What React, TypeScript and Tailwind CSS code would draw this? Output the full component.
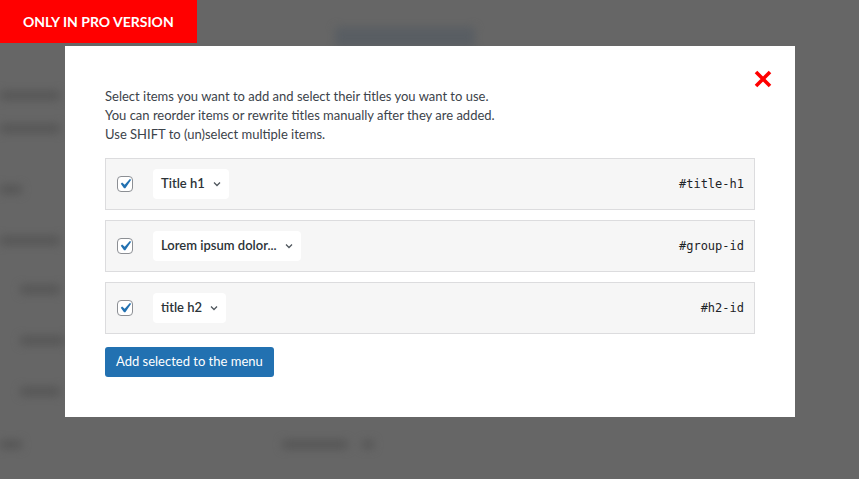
import React from "react";

const rows = [
  { title: "Title h1", id: "#title-h1" },
  { title: "Lorem ipsum dolor...", id: "#group-id" },
  { title: "title h2", id: "#h2-id" },
];

function Check() {
  return (
    <div className="w-4 h-4 rounded-[4px] border border-[#8c8f94] bg-white flex items-center justify-center shrink-0 overflow-visible">
      <svg width="20" height="20" viewBox="0 0 20 20" className="shrink-0 -m-1">
        <path d="M14.83 4.89l1.34.94-5.81 8.38H9.02L5.78 9.67l1.34-1.25 2.57 2.4z" fill="#2271b1" />
      </svg>
    </div>
  );
}

function Chevron() {
  return (
    <svg width="10" height="10" viewBox="0 0 10 10" className="ml-[7px]">
      <path d="M2 3.5 L5 6.5 L8 3.5" stroke="#50575e" strokeWidth="1.3" fill="none" />
    </svg>
  );
}

function Blob({ w, className = "" }: { w: string; className?: string }) {
  return <div className={`h-[9px] bg-[#565656] rounded ${w} ${className}`} />;
}

export default function App() {
  return (
    <div
      className="relative w-[859px] h-[479px] overflow-hidden bg-[#666666]"
      style={{ fontFamily: 'Lato, "Noto Sans", sans-serif' }}
    >
      {/* blurred background page */}
      <div className="absolute inset-0 blur-[4px] flex flex-col">
        <div className="h-[27px]" />
        <div className="pl-[335px]">
          <div className="w-[140px] h-[20px] rounded bg-[#595e63]" />
        </div>
        <div className="flex flex-col gap-[24px] pt-[44px]">
          <Blob w="w-[60px]" />
          <Blob w="w-[60px]" />
        </div>
        <div className="flex flex-col pt-[52px] gap-[42px]">
          <Blob w="w-[22px]" />
          <Blob w="w-[60px]" />
        </div>
        <div className="flex flex-col pl-[20px] pt-[40px] gap-[42px]">
          <Blob w="w-[40px]" />
          <Blob w="w-[45px]" />
          <Blob w="w-[40px]" />
        </div>
        <div className="flex items-center pt-[44px]">
          <Blob w="w-[22px]" />
          <Blob w="w-[66px]" className="ml-[260px]" />
          <Blob w="w-[12px]" className="ml-[14px]" />
        </div>
      </div>

      {/* pro banner */}
      <div className="absolute left-0 top-0 w-[197px] h-[43px] bg-[#ff0000] flex items-center pl-[23px] text-white font-bold text-[14px]">
        ONLY IN PRO VERSION
      </div>

      {/* modal */}
      <div className="absolute left-[65px] top-[46px] w-[730px] h-[371px] bg-white px-10 pt-[41px]">
        <svg
          className="absolute right-[23px] top-[24px]"
          width="18"
          height="18"
          viewBox="0 0 18 18"
        >
          <path d="M2 2 L16 16 M16 2 L2 16" stroke="#ff0000" strokeWidth="3.6" />
        </svg>

        <div className="text-[13px] leading-[19px] text-[#3c434a]">
          <p>Select items you want to add and select their titles you want to use.</p>
          <p>You can reorder items or rewrite titles manually after they are added.</p>
          <p>Use SHIFT to (un)select multiple items.</p>
        </div>

        <div className="mt-[14px] flex flex-col gap-[10px]">
          {rows.map((r) => (
            <div
              key={r.id}
              className="h-[52px] border border-[#dcdcde] bg-[#f6f6f6] flex items-center pl-[11px] pr-[10px]"
            >
              <Check />
              <div className="ml-[20px] h-[30px] rounded-[4px] bg-white flex items-center pl-2 pr-[7px] text-[13px] font-semibold text-[#2c3338]">
                {r.title}
                <Chevron />
              </div>
              <div
                className="ml-auto text-[12px] text-[#1d2327]"
                style={{ fontFamily: '"DejaVu Sans Mono", "Liberation Mono", monospace' }}
              >
                {r.id}
              </div>
            </div>
          ))}
        </div>

        <button className="mt-[13px] h-[30px] px-[11px] rounded-[3px] bg-[#2271b1] text-white text-[13px]">
          Add selected to the menu
        </button>
      </div>
    </div>
  );
}
